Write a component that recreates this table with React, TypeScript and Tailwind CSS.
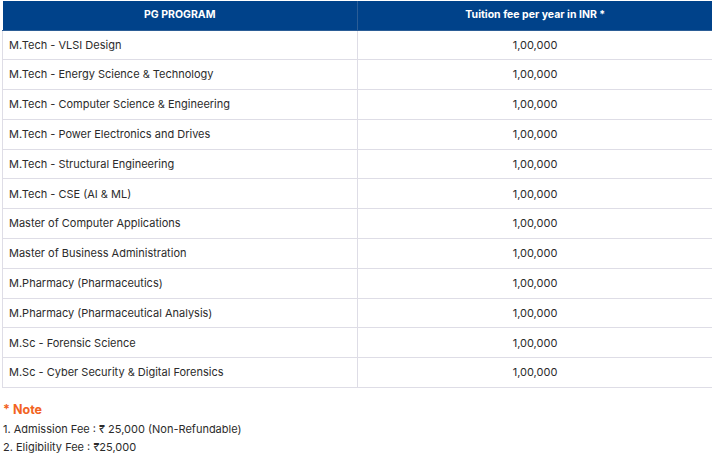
import React from 'react'

const programs = [
  'M.Tech - VLSI Design',
  'M.Tech - Energy Science & Technology',
  'M.Tech - Computer Science & Engineering',
  'M.Tech - Power Electronics and Drives',
  'M.Tech - Structural Engineering',
  'M.Tech - CSE (AI & ML)',
  'Master of Computer Applications',
  'Master of Business Administration',
  'M.Pharmacy (Pharmaceutics)',
  'M.Pharmacy (Pharmaceutical Analysis)',
  'M.Sc - Forensic Science',
  'M.Sc - Cyber Security & Digital Forensics',
]

export default function App() {
  return (
    <div className="min-h-screen w-full overflow-hidden bg-white pl-[2px] pt-[1px] font-['Inter','Liberation_Sans',sans-serif] text-[#2b2b2b]">
      <table className="w-[711px] table-fixed border-collapse text-[11px]">
        <thead>
          <tr className="h-[29px] bg-[#00428a] text-white">
            <th className="w-[355px] border-r border-b border-[#2b5d96] text-center text-[10.5px] font-bold">PG PROGRAM</th>
            <th className="border-b border-[#2b5d96] text-center text-[10.5px] font-bold">Tuition fee per year in INR *</th>
          </tr>
        </thead>
        <tbody>
          {programs.map((p) => (
            <tr key={p} className="h-[29.8px]">
              <td className="border border-[#dedde6] px-[6px] text-left">{p}</td>
              <td className="border border-[#dedde6] text-center">1,00,000</td>
            </tr>
          ))}
        </tbody>
      </table>

      {/* fee note */}
      <div className="mt-[14px] pl-[1px]">
        <div className="text-[12.5px] font-bold leading-[16px] text-[#f26322]">* Note</div>
        <div className="mt-[2px] text-[11px] leading-[18px]">1. Admission Fee : ₹ 25,000 (Non-Refundable)</div>
        <div className="text-[11px] leading-[18px]">2. Eligibility Fee : ₹25,000</div>
      </div>
    </div>
  )
}
